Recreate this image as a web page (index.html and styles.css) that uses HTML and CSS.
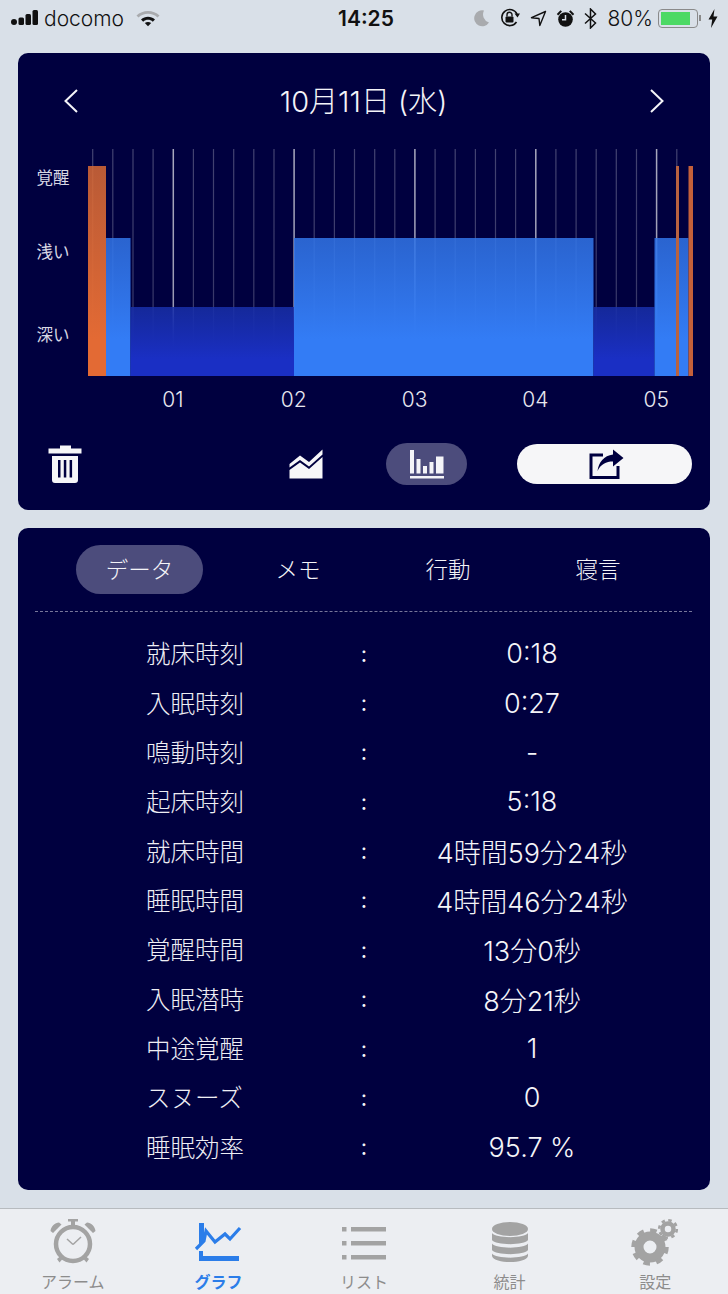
FILE: index.html
```html
<!DOCTYPE html>
<html lang="ja">
<head>
    <meta charset="UTF-8">
    <title>グラフ</title>
    <link rel="stylesheet" href="styles.css">
</head>
<body>
    <div class="status">
        <div class="status-left">
            <svg width="30" height="18" viewBox="0 0 30 18"><circle cx="4" cy="13" r="3"/><rect x="8.500" y="8.500" width="5.500" height="7.500" rx="1.500"/><rect x="15.500" y="5" width="5.500" height="11" rx="1.500"/><rect x="22.500" y="1" width="5.500" height="15" rx="1.500"/></svg>
            <span class="carrier">docomo</span>
            <svg width="24" height="18" viewBox="0 0 24 18"><path d="M0.500 6.500C6.500 0.500 17.500 0.500 23.500 6.500L21.500 8.500C16.500 3.500 7.500 3.500 2.500 8.500Z" fill="#a9abae"/><path d="M5 10.500C9 6.800 15 6.800 19 10.500L16.800 12.700C14 10.200 10 10.200 7.200 12.700Z"/><path d="M8.800 14C10.800 12.500 13.200 12.500 15.200 14L12 17.200Z"/></svg>
        </div>
        <div class="clock">14:25</div>
        <div class="status-right">
            <svg width="17" height="18" viewBox="0 0 17 18"><path d="M11 1.500A8 8 0 1 0 16 13.500A8.500 8.500 0 0 1 11 1.500Z" fill="#a9abae"/></svg>
            <svg class="gap-l" width="22" height="20" viewBox="0 0 22 20"><path d="M17.500 14A8 8 0 1 1 18 6" fill="none" stroke="#111" stroke-width="1.600"/><path d="M15.500 5.500L21 5.500L18.500 9.500Z"/><rect x="6.500" y="8.500" width="8" height="6" rx="1"/><path d="M8 8.500V6.800a2.500 2.500 0 0 1 5 0V8.500" fill="none" stroke="#111" stroke-width="1.400"/></svg>
            <svg class="gap-m" width="17" height="17" viewBox="0 0 17 17"><path d="M15.500 1.500L1.500 7.700L9 8.500L9.800 15.500Z" fill="none" stroke="#111" stroke-width="1.400" stroke-linejoin="round"/></svg>
            <svg class="gap-m" width="19" height="19" viewBox="0 0 19 19"><circle cx="9.500" cy="10.500" r="7.300"/><path d="M9.500 6V10.800H6" fill="none" stroke="#d9e0e8" stroke-width="1.500"/><path d="M0.800 5L4.500 1.200L6 2.500L2.200 6.500ZM18.200 5L14.500 1.200L13 2.500L16.800 6.500Z"/></svg>
            <svg class="gap-m" width="13" height="21" viewBox="0 0 13 21"><path d="M1 5.500L11.500 15L6.500 20V1L11.500 6L1 15.500" fill="none" stroke="#111" stroke-width="1.500"/></svg>
            <span class="battery-text">80%</span>
            <div class="battery"><div class="battery-fill"></div></div>
            <div class="battery-nub"></div>
            <svg class="bolt" width="10" height="19" viewBox="0 0 10 19"><path d="M6.500 0L0.500 10.500H4.200L3 19L9.500 7.500H5.500Z"/></svg>
        </div>
    </div>

    <div class="card card-chart">
        <div class="date-row">
            <svg width="16" height="24" viewBox="0 0 16 24"><path d="M14 1L2.500 12L14 23" fill="none" stroke="#f4f4f8" stroke-width="2"/></svg>
            <div class="date">10月11日 (水)</div>
            <svg width="16" height="24" viewBox="0 0 16 24"><path d="M2 1L13.500 12L2 23" fill="none" stroke="#f4f4f8" stroke-width="2"/></svg>
        </div>

        <div class="chart">
            <div class="y-labels">
                <div>覚醒</div>
                <div>浅い</div>
                <div>深い</div>
            </div>
            <svg class="plot" width="622" height="227" viewBox="0 0 622 227">
                <defs>
                    <linearGradient id="light" gradientUnits="userSpaceOnUse" x1="0" y1="89" x2="0" y2="190"><stop offset="0" stop-color="#3174e7" stop-opacity=".86"/><stop offset="1" stop-color="#337cf5"/></linearGradient>
                    <linearGradient id="deep" gradientUnits="userSpaceOnUse" x1="0" y1="158" x2="0" y2="210"><stop offset="0" stop-color="#182fa9" stop-opacity=".86"/><stop offset="1" stop-color="#1a2fc4"/></linearGradient>
                    <linearGradient id="awake" gradientUnits="userSpaceOnUse" x1="0" y1="17" x2="0" y2="190"><stop offset="0" stop-color="#d76935" stop-opacity=".86"/><stop offset="1" stop-color="#e36a34"/></linearGradient>
                    <linearGradient id="tick" gradientUnits="userSpaceOnUse" x1="0" y1="0" x2="0" y2="200"><stop offset="0" stop-color="#fff" stop-opacity=".26"/><stop offset=".8" stop-color="#fff" stop-opacity=".22"/><stop offset="1" stop-color="#fff" stop-opacity="0"/></linearGradient>
                    <linearGradient id="tick-hour" gradientUnits="userSpaceOnUse" x1="0" y1="0" x2="0" y2="200"><stop offset="0" stop-color="#fff" stop-opacity=".66"/><stop offset=".8" stop-color="#fff" stop-opacity=".6"/><stop offset="1" stop-color="#fff" stop-opacity="0"/></linearGradient>
                </defs>
                <g class="ticks">
                    <path d="M4.700 0V200M24.800 0V200M45 0V200M65.100 0V200M105.400 0V200M125.500 0V200M145.700 0V200M165.800 0V200M186 0V200M226.200 0V200M246.400 0V200M266.500 0V200M286.700 0V200M306.800 0V200M347.100 0V200M367.200 0V200M387.400 0V200M407.500 0V200M427.600 0V200M467.900 0V200M488.100 0V200M508.200 0V200M528.300 0V200M548.500 0V200M588.800 0V200" fill="none" stroke="url(#tick)" stroke-width="1.200"/>
                    <path d="M85.300 0V200M206.100 0V200M326.900 0V200M447.800 0V200M568.600 0V200" fill="none" stroke="url(#tick-hour)" stroke-width="1.500"/>
                </g>
                <rect x="0" y="17" width="18" height="210" fill="url(#awake)"/>
                <rect x="18" y="89" width="24.500" height="138" fill="url(#light)"/>
                <rect x="42.500" y="158" width="163.500" height="69" fill="url(#deep)"/>
                <rect x="206" y="89" width="299.500" height="138" fill="url(#light)"/>
                <rect x="505.500" y="158" width="61" height="69" fill="url(#deep)"/>
                <rect x="566.500" y="89" width="34" height="138" fill="url(#light)"/>
                <rect x="588" y="17" width="3" height="210" fill="#b9623f"/>
                <rect x="600.500" y="17" width="4.500" height="210" fill="#c4603a"/>
            </svg>
        </div>

        <div class="x-labels">
            <div>01</div>
            <div>02</div>
            <div>03</div>
            <div>04</div>
            <div>05</div>
        </div>

        <div class="tools">
            <svg class="tool-trash" width="34" height="38" viewBox="0 0 34 38"><path d="M12 0.500H23V3.500H33.500V8.500H0.500V3.500H12Z" fill="#f6f6f8"/><path fill-rule="evenodd" d="M4 11H30V35a3 3 0 0 1 -3 3H7a3 3 0 0 1 -3 -3ZM10 15V32.500H12.500V15ZM15.800 15V32.500H18.300V15ZM21.600 15V32.500H24.100V15Z" fill="#f6f6f8"/></svg>
            <svg class="tool-area" width="34" height="30" viewBox="0 0 34 30"><path d="M0.500 15L11 6.500L20 13L33.500 0.500V5.500L20 17.500L11 11L0.500 18.500Z" fill="#f6f6f8"/><path d="M0.500 21L11 13.500L20 20L33.500 8V29.500H0.500Z" fill="#f6f6f8"/></svg>
            <div class="tool-pill">
                <svg width="36" height="30" viewBox="0 0 36 30"><path d="M1 1H5V24.500H1ZM7.500 10H11.500V24.500H7.500ZM14 17H18V24.500H14ZM20.500 13H24.500V24.500H20.500ZM27 7.500H34.500V24.500H27ZM1 27H35V29.500H1Z" fill="#f4f4f8"/></svg>
            </div>
            <div class="share-btn">
                <svg width="35" height="30" viewBox="0 0 35 30"><path d="M14 6H2V28.500H29V17" fill="none" stroke="#00003f" stroke-width="3"/><path d="M24 0.500L34.500 9L24 17.500V12.500C17 12.500 12 15 8.500 22C9.500 13.500 15 6.500 24 5.500Z" fill="#00003f"/></svg>
            </div>
        </div>
    </div>

    <div class="card card-data">
        <div class="tabs">
            <div class="tab tab-active">データ</div>
            <div class="tab">メモ</div>
            <div class="tab">行動</div>
            <div class="tab">寝言</div>
        </div>
        <div class="rows">
            <div class="row"><div class="label">就床時刻</div><div class="sep">:</div><div class="value">0:18</div></div>
            <div class="row"><div class="label">入眠時刻</div><div class="sep">:</div><div class="value">0:27</div></div>
            <div class="row"><div class="label">鳴動時刻</div><div class="sep">:</div><div class="value">-</div></div>
            <div class="row"><div class="label">起床時刻</div><div class="sep">:</div><div class="value">5:18</div></div>
            <div class="row"><div class="label">就床時間</div><div class="sep">:</div><div class="value">4時間59分24秒</div></div>
            <div class="row"><div class="label">睡眠時間</div><div class="sep">:</div><div class="value">4時間46分24秒</div></div>
            <div class="row"><div class="label">覚醒時間</div><div class="sep">:</div><div class="value">13分0秒</div></div>
            <div class="row"><div class="label">入眠潜時</div><div class="sep">:</div><div class="value">8分21秒</div></div>
            <div class="row"><div class="label">中途覚醒</div><div class="sep">:</div><div class="value">1</div></div>
            <div class="row"><div class="label">スヌーズ</div><div class="sep">:</div><div class="value">0</div></div>
            <div class="row"><div class="label">睡眠効率</div><div class="sep">:</div><div class="value">95.7 %</div></div>
        </div>
    </div>

    <div class="tabbar">
        <div class="nav-item">
            <svg width="48" height="48" viewBox="0 0 48 48"><circle cx="24" cy="26" r="17" fill="none" stroke="#a3a3a3" stroke-width="4.500"/><path d="M24 26.500L32 19M24 26.500L18 21" fill="none" stroke="#a3a3a3" stroke-width="1.500"/><path d="M19 1H29V3.500H26V7H22V3.500H19ZM1.500 13C2 8 6 5 10 4.500L12.500 6.500L4 15ZM46.500 13C46 8 42 5 38 4.500L35.500 6.500L44 15ZM8 41L11.500 38L14 40.500L10.500 44.500ZM40 41L36.500 38L34 40.500L37.500 44.500Z" fill="#a3a3a3"/></svg>
            <div class="nav-label">アラーム</div>
        </div>
        <div class="nav-item nav-active">
            <svg width="48" height="48" viewBox="0 0 48 48"><path d="M5 5H10V22L5 27ZM5 33H9V38H45V43H5Z" fill="#2b7de9"/><path d="M2 31L10 23L12 13L21 24L31 16L36 21L46 10" fill="none" stroke="#2b7de9" stroke-width="3.200"/></svg>
            <div class="nav-label">グラフ</div>
        </div>
        <div class="nav-item">
            <svg width="48" height="48" viewBox="0 0 48 48"><path d="M2 9H6.500V13.500H2ZM11 9H46V13.500H11ZM2 23H6.500V27.500H2ZM11 23H46V27.500H11ZM2 37H6.500V41.500H2ZM11 37H46V41.500H11Z" fill="#a3a3a3"/></svg>
            <div class="nav-label">リスト</div>
        </div>
        <div class="nav-item">
            <svg width="48" height="48" viewBox="0 0 48 48"><ellipse cx="24" cy="11" rx="18" ry="7" fill="#a3a3a3"/><path d="M6 15C9 20.500 39 20.500 42 15V22C39 27.500 9 27.500 6 22ZM6 25.500C9 31 39 31 42 25.500V32C39 37.500 9 37.500 6 32ZM6 35.500C9 41 39 41 42 35.500V38C40 46 8 46 6 38Z" fill="#a3a3a3"/></svg>
            <div class="nav-label">統計</div>
        </div>
        <div class="nav-item">
            <svg width="48" height="48" viewBox="0 0 48 48"><circle cx="19" cy="29" r="11" fill="none" stroke="#a3a3a3" stroke-width="9"/><circle cx="19" cy="29" r="16.500" fill="none" stroke="#a3a3a3" stroke-width="4.500" stroke-dasharray="6.500 6.400"/><circle cx="37" cy="11" r="5.500" fill="none" stroke="#a3a3a3" stroke-width="4.500"/><circle cx="37" cy="11" r="8.800" fill="none" stroke="#a3a3a3" stroke-width="2.600" stroke-dasharray="3.450 3.460"/></svg>
            <div class="nav-label">設定</div>
        </div>
    </div>
</body>
</html>
```

FILE: styles.css
```css
html, body { margin: 0; padding: 0; }
body { width: 728px; height: 1294px; overflow: hidden; background: #d9e0e8; font-family: Inter, "Noto Sans CJK JP", sans-serif; color: #f4f4f8; display: flex; flex-direction: column; }

/* status bar */
.status { height: 38px; padding: 0 10px 2px; box-sizing: border-box; display: grid; grid-template-columns: 1fr auto 1fr; align-items: center; color: #111; fill: #111; flex: none; }
.status-left, .status-right { display: flex; align-items: center; }
.status-right { justify-content: flex-end; }
.carrier { font-size: 21px; font-weight: 300; margin: 0 12px 0 4px; }
.clock { font-size: 21px; font-weight: 600; margin-left: 4px; }
.gap-l { margin-left: 9px; }
.gap-m { margin-left: 9px; }
.battery-text { font-size: 21px; font-weight: 300; margin-left: 11px; margin-right: 5px; }
.battery { width: 40px; height: 19px; box-sizing: border-box; border: 1.500px solid #8a8a8a; border-radius: 4px; padding: 2px; }
.battery-fill { width: 29px; height: 100%; background: #4cd964; }
.battery-nub { width: 2px; height: 6px; background: #8a8a8a; margin-left: 1px; }
.bolt { margin-left: 7px; }

/* cards */
.card { background: #00003f; border-radius: 10px; margin: 0 18px; flex: none; }
.card-chart { margin-top: 15px; height: 457px; }
.card-data { margin-top: 18px; height: 662px; }

.date-row { height: 96px; padding: 0 45px; box-sizing: border-box; display: flex; justify-content: space-between; align-items: center; }
.date { font-size: 29px; font-weight: 300; line-height: 40px; margin: 2px 0 0 -1px; }

.chart { display: flex; }
.y-labels { width: 70px; box-sizing: border-box; padding: 0 0 2px 18.500px; display: grid; grid-template-rows: 56px 92px 74px; align-items: center; font-size: 16.500px; color: #d8d8e4; }
.plot { display: block; }

.x-labels { margin-left: 94.600px; margin-top: 9px; display: flex; font-size: 21px; font-weight: 300; color: #e8e8f0; line-height: 30px; }
.x-labels div { flex: none; width: 120.800px; text-align: center; }

.tools { height: 52px; margin-top: 23px; display: flex; align-items: center; }
.tool-trash { margin-left: 30px; }
.tool-area { margin-left: 207px; }
.tool-pill { width: 81px; height: 42px; margin-left: 63px; border-radius: 21px; background: #4c4c7c; display: flex; align-items: center; justify-content: center; }
.share-btn { width: 175px; height: 40px; margin-left: 50px; border-radius: 20px; background: #f6f6f8; display: flex; align-items: center; justify-content: center; }
.share-btn svg { margin-left: 3px; }

/* data card */
.tabs { display: flex; padding: 17px 0 17px 58px; position: relative; }
.tabs::after { content: ""; position: absolute; left: 17px; right: 18px; bottom: -1px; border-bottom: 1px dashed #77779a; }
.tab { width: 150px; height: 49px; line-height: 49px; text-align: center; font-size: 22.500px; font-weight: 300; }
.tab-active { width: 127px; margin-right: 20px; border-radius: 24.500px; background: #4c4c7c; }
.rows { padding-top: 18px; }
.row { height: 49.360px; padding-left: 128px; display: grid; grid-template-columns: 212px 12px 324px; align-items: center; }
.label { font-size: 24.500px; font-weight: 300; color: #eeeef4; padding-bottom: 2px; }
.sep { font-size: 22px; font-weight: 400; text-align: center; }
.value { font-size: 27px; font-weight: 300; text-align: center; }

/* tab bar */
.tabbar { margin-top: 17.500px; flex: 1; min-height: 0; background: #eceef2; border-top: 1px solid #b7bbbf; display: grid; grid-template-columns: repeat(5, 1fr); overflow: hidden; }
.nav-item { display: flex; flex-direction: column; align-items: center; padding-top: 9px; color: #8c8c8c; }
.nav-label { font-size: 16px; line-height: 20px; margin-top: 6px; white-space: nowrap; }
.nav-active { color: #2b7de9; font-weight: 700; }
```
